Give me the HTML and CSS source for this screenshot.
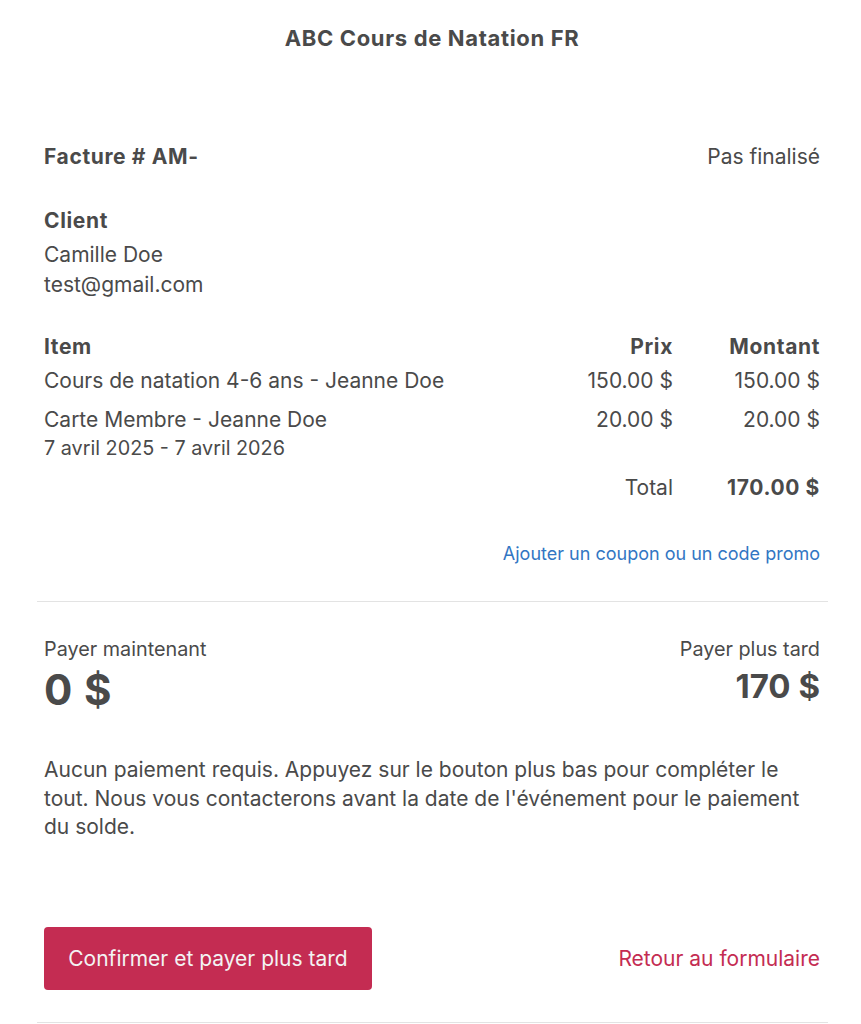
FILE: index.html
```html
<!DOCTYPE html>
<html lang="fr">
<head>
<meta charset="utf-8">
<title>ABC Cours de Natation FR</title>
<link rel="stylesheet" href="styles.css">
</head>
<body>
<div class="page">
  <div class="inner">
    <h1 class="title">ABC Cours de Natation FR</h1>

    <div class="invoice-head">
      <span class="invoice-no">Facture # AM-</span>
      <span class="status">Pas finalisé</span>
    </div>

    <div class="client">
      <div class="client-label">Client</div>
      <div class="client-line">Camille Doe</div>
      <div class="client-line">test@gmail.com</div>
    </div>

    <div class="items">
      <div class="row head">
        <div class="c-item">Item</div>
        <div class="c-num">Prix</div>
        <div class="c-num">Montant</div>
      </div>
      <div class="row first">
        <div class="c-item">Cours de natation 4-6 ans - Jeanne Doe</div>
        <div class="c-num">150.00 $</div>
        <div class="c-num">150.00 $</div>
      </div>
      <div class="row second">
        <div class="c-item">Carte Membre - Jeanne Doe<div class="sub">7 avril 2025 - 7 avril 2026</div></div>
        <div class="c-num">20.00 $</div>
        <div class="c-num">20.00 $</div>
      </div>
      <div class="row total">
        <div class="c-item"></div>
        <div class="c-num">Total</div>
        <div class="c-num strong">170.00 $</div>
      </div>
    </div>

    <div class="promo"><a href="#" class="promo-link">Ajouter un coupon ou un code promo</a></div>
  </div>

  <hr class="divider">

  <div class="inner">
    <div class="pay">
      <div class="pay-col">
        <div class="pay-label">Payer maintenant</div>
        <div class="pay-amount">0 $</div>
      </div>
      <div class="pay-col right">
        <div class="pay-label">Payer plus tard</div>
        <div class="pay-amount small">170 $</div>
      </div>
    </div>

    <p class="note">Aucun paiement requis. Appuyez sur le bouton plus bas pour compléter le tout. Nous vous contacterons avant la date de l'événement pour le paiement du solde.</p>

    <div class="actions">
      <button class="btn-confirm" type="button">Confirmer et payer plus tard</button>
      <a href="#" class="back-link">Retour au formulaire</a>
    </div>
  </div>

  <hr class="divider bottom">
</div>
</body>
</html>
```

FILE: styles.css
```css
* { box-sizing: border-box; }

html, body {
  margin: 0;
  padding: 0;
  background: #ffffff;
}

body {
  font-family: Inter, "Noto Sans", "Liberation Sans", sans-serif;
  color: #4a4a4a;
  font-size: 21px;
}

.page {
  width: 791px;
  margin-left: 37px;
}

.inner {
  padding: 0 8px 0 7px;
}

.title {
  margin: 0;
  padding-top: 24px;
  font-size: 22px;
  line-height: 28px;
  font-weight: 700;
  letter-spacing: 0.03em;
  text-align: center;
}

.invoice-head {
  margin-top: 91px;
  display: flex;
  justify-content: space-between;
  line-height: 28px;
  font-size: 21px;
}

.invoice-no {
  font-weight: 700;
  letter-spacing: 0.03em;
}

.client {
  margin-top: 35px;
  font-size: 21px;
}

.client-label {
  font-weight: 700;
  letter-spacing: 0.03em;
  line-height: 30px;
  margin-bottom: 4px;
}

.client-line { line-height: 30px; }

.items {
  margin-top: 32px;
  font-size: 21px;
}

.row {
  display: grid;
  grid-template-columns: 1fr 140px 147px;
  line-height: 30px;
}

.row.first { margin-top: 4px; }
.row.second { margin-top: 9px; }
.row.total { margin-top: 12px; }

.row.head,
.strong {
  font-weight: 700;
  letter-spacing: 0.03em;
}

.c-num { text-align: right; }

.sub {
  font-size: 19.8px;
  line-height: 26px;
}

.promo {
  margin-top: 39px;
  text-align: right;
  line-height: 24px;
  font-size: 18px;
}

.promo-link {
  color: #3276c3;
  text-decoration: none;
}

.divider {
  margin: 35px 0 0;
  border: 0;
  border-top: 1px solid #e3e3e3;
  height: 0;
}

.pay {
  margin-top: 35px;
  display: flex;
  justify-content: space-between;
}

.pay-col.right { text-align: right; }

.pay-label {
  font-size: 19.8px;
  line-height: 24px;
}

.pay-amount {
  margin-top: 6px;
  font-size: 42px;
  line-height: 46px;
  font-weight: 700;
  letter-spacing: 0.02em;
}

.pay-amount.small {
  font-size: 33px;
  line-height: 38px;
  margin-top: 6px;
  letter-spacing: 0;
}

.note {
  margin: 43px 0 0;
  font-size: 21px;
  line-height: 28.5px;
}

.actions {
  margin-top: 85px;
  display: flex;
  justify-content: space-between;
  align-items: center;
}

.btn-confirm {
  width: 328px;
  height: 63px;
  border: 0;
  border-radius: 4px;
  background: #c42c52;
  color: #f3f3f3;
  font-family: inherit;
  font-size: 21px;
  cursor: pointer;
}

.back-link {
  color: #c42c52;
  text-decoration: none;
  font-size: 21px;
}

.divider.bottom {
  margin-top: 32px;
}
```
